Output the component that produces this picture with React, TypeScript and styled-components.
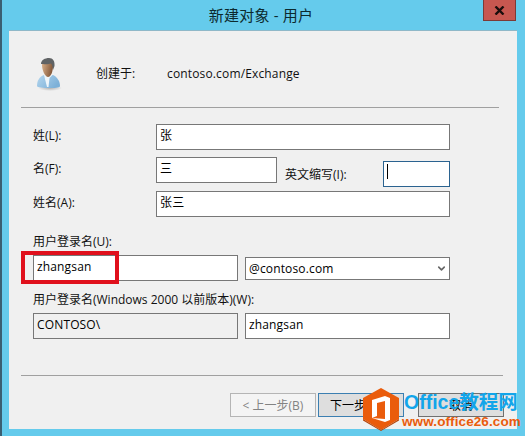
import styled, { createGlobalStyle } from "styled-components";
import { ChevronDown } from "lucide-react";

const GlobalStyle = createGlobalStyle`
  html, body {
    margin: 0;
    padding: 0;
    background: #65cbec;
  }
  * {
    box-sizing: border-box;
  }
`;

const uiFont = `"Open Sans", "Noto Sans CJK SC", sans-serif`;

const Window = styled.div`
  position: relative;
  width: 525px;
  height: 436px;
  overflow: hidden;
  display: flex;
  flex-direction: column;
  background: #65cbec;
  border-left: 2px solid #3a5f72;
  font-family: ${uiFont};
  font-size: 12px;
  color: #111;
`;

const TitleBar = styled.div`
  position: relative;
  height: 30px;
  flex: none;
  display: flex;
  align-items: center;
  justify-content: center;
  padding: 0 5px 2px 0;
  font-size: 15px;
  letter-spacing: 0.2px;
  color: #0c2a2e;
`;

const CloseButton = styled.div`
  position: absolute;
  top: 0;
  left: 481px;
  width: 33px;
  height: 21px;
  display: flex;
  align-items: center;
  justify-content: center;
  background: #c75750;
  border: 1px solid #7d3a36;
  border-top: none;
`;

const Panel = styled.div`
  flex: none;
  width: 508px;
  height: 399px;
  margin-left: 7px;
  padding: 0 12px;
  background: #f0f0f0;
  border-top: 1px solid #8fb8c8;
`;

const Header = styled.div`
  height: 76px;
  display: flex;
  align-items: center;
  padding: 8px 0 0 15px;
`;

const HeaderIcon = styled.span`
  display: flex;
  margin-top: 2px;
`;

const HeaderLabel = styled.span`
  margin-left: 34px;
  width: 71px;
`;

const HeaderValue = styled.span`
  letter-spacing: 0.15px;
`;

const Rule = styled.div<{ $width: number }>`
  height: 1px;
  width: ${({ $width }) => $width}px;
  background: #a0a0a0;
`;

const Form = styled.div`
  height: 267px;
  padding: 16px 0 0 12px;
`;

const Row = styled.div<{ $gap: number }>`
  display: flex;
  align-items: flex-start;
  height: 26px;
  margin-bottom: ${({ $gap }) => $gap}px;
`;

const RowLabel = styled.label`
  width: 123px;
  flex: none;
  line-height: 24px;
`;

const InlineLabel = styled.label`
  width: 98px;
  flex: none;
  margin-left: 8px;
  line-height: 24px;
  margin-top: 6px;
`;

const GroupLabel = styled.label<{ $top?: number }>`
  display: block;
  height: 16px;
  line-height: 16px;
  margin-top: ${({ $top }) => $top ?? 0}px;
  margin-bottom: 5px;
`;

const Field = styled.input<{ $width: number; $disabled?: boolean }>`
  width: ${({ $width }) => $width}px;
  height: 26px;
  flex: none;
  padding: 0 3px 4px;
  border: 1px solid #777;
  border-radius: 0;
  outline: none;
  background: ${({ $disabled }) => ($disabled ? "#f0f0f0" : "#fff")};
  font: inherit;
  letter-spacing: 0.15px;
  color: #000;
`;

const AbbrevBox = styled.div`
  position: relative;
  width: 67px;
  height: 26px;
  flex: none;
  margin-top: 4px;
  background: #fff;
  border: 1px solid #2b6390;
`;

const Caret = styled.span`
  position: absolute;
  left: 3px;
  top: 2px;
  width: 1px;
  height: 15px;
  background: #000;
`;

const FieldPair = styled.div`
  display: flex;
  align-items: center;
  gap: 7px;
  height: 26px;
`;

const SelectBox = styled.div`
  position: relative;
  width: 205px;
  height: 23px;
  flex: none;
  color: #666;
`;

const Select = styled.select`
  width: 100%;
  height: 100%;
  padding: 0 0 0 3px;
  appearance: none;
  border: 1px solid #777;
  border-radius: 0;
  outline: none;
  background: #fff;
  font: inherit;
  letter-spacing: 0.15px;
  color: #000;
`;

const SelectArrow = styled.span`
  position: absolute;
  right: 3px;
  top: 6px;
  display: flex;
`;

const Footer = styled.div`
  display: flex;
  justify-content: flex-end;
  gap: 2px;
  padding: 17px 0 0 0;
  width: 483px;
`;

const WizardButton = styled.button<{ $variant: "disabled" | "primary" | "normal"; $after?: number }>`
  width: 86px;
  height: 24px;
  padding: 0;
  margin-right: ${({ $after }) => $after ?? 0}px;
  font: inherit;
  border: 1px solid
    ${({ $variant }) =>
      $variant === "disabled" ? "#b5b5b5" : $variant === "primary" ? "#3c7fb1" : "#707070"};
  background: ${({ $variant }) => ($variant === "disabled" ? "#f4f4f4" : "#dedede")};
  color: ${({ $variant }) => ($variant === "disabled" ? "#838383" : "#000")};
`;

const Highlight = styled.div`
  position: absolute;
  left: 19px;
  top: 251px;
  width: 98px;
  height: 33px;
  border: 4px solid #e0101c;
`;

const Watermark = styled.div`
  position: absolute;
  left: 360px;
  top: 387px;
  display: flex;
  align-items: flex-start;
  gap: 2px;
`;

const WatermarkText = styled.div`
  display: flex;
  flex-direction: column;
  margin-top: 4px;
  font-family: "Liberation Sans", "Noto Sans CJK SC", sans-serif;
  font-weight: 700;
`;

const WatermarkTitle = styled.span`
  font-size: 19.5px;
  line-height: 23px;
  padding-left: 2px;
  color: #12a5ea;
  white-space: nowrap;
`;

const WatermarkUrl = styled.span`
  font-size: 13.5px;
  line-height: 15px;
  letter-spacing: 0.1px;
  color: #ea5c0c;
  white-space: nowrap;
`;

const UserIcon = () => (
  <svg width="26" height="33" viewBox="0 0 26 33">
    <defs>
      <linearGradient id="face" x1="0" y1="0" x2="1" y2="0.3">
        <stop offset="0" stopColor="#dcb48e" />
        <stop offset="1" stopColor="#85593a" />
      </linearGradient>
      <linearGradient id="shirt" x1="0" y1="0" x2="1" y2="0.5">
        <stop offset="0" stopColor="#b4d6ee" />
        <stop offset="1" stopColor="#7cb0d8" />
      </linearGradient>
      <radialGradient id="shade" cx="0.5" cy="0.5" r="0.5">
        <stop offset="0" stopColor="#888" stopOpacity="0.6" />
        <stop offset="1" stopColor="#888" stopOpacity="0" />
      </radialGradient>
    </defs>
    <ellipse cx="14" cy="30" rx="12" ry="3" fill="url(#shade)" />
    <path d="M1 28c0-5 2-9 7-11h9c4 2 7 6 7 11 0 1.500-3 2-10 2S1 29.500 1 28z" fill="url(#shirt)" />
    <path d="M8 17l3 12 1.500 0 1-9 3-3z" fill="#eef5fa" />
    <path d="M6 7c0-3 3-5 6-5s5 3 5 6c0 5-2 11-5 11-3 0-6-7-6-12z" fill="url(#face)" />
    <path d="M5 6c0-4 4-6 8-6 4 0 6 3 5.500 8L17 12c-.5-3-.5-5-2-6.500-2 .8-6 1-8 .5z" fill="#606365" />
  </svg>
);

const OfficeBadge = () => (
  <svg width="38" height="44" viewBox="0 0 38 44">
    <path d="M19 1l18 10v21L19 43 1 32V11z" fill="#ea5c0c" />
    <path d="M1 32l18 11 18-11v1.500L19 44 1 33.500z" fill="#b8460a" />
    <path d="M10 13l13-4 5 2v22l-5 2-13-4 13 1V14l-8 2v13l-5 2z" fill="#fff" />
  </svg>
);

export default function App() {
  return (
    <>
      <GlobalStyle />
      <Window>
        <TitleBar>
          新建对象 - 用户
          <CloseButton>
            <svg width="11" height="9" viewBox="0 0 11 9">
              <path d="M1.500 0.500l8 8M9.500 0.500l-8 8" stroke="#1a0d0c" strokeWidth="2.400" />
            </svg>
          </CloseButton>
        </TitleBar>
        <Panel>
          <Header>
            <HeaderIcon>
              <UserIcon />
            </HeaderIcon>
            <HeaderLabel>创建于:</HeaderLabel>
            <HeaderValue>contoso.com/Exchange</HeaderValue>
          </Header>
          <Rule $width={478} />
          <Form>
            <Row $gap={7}>
              <RowLabel>姓(L):</RowLabel>
              <Field $width={294} defaultValue="张" />
            </Row>
            <Row $gap={8}>
              <RowLabel>名(F):</RowLabel>
              <Field $width={121} defaultValue="三" />
              <InlineLabel>英文缩写(I):</InlineLabel>
              <AbbrevBox>
                <Caret />
              </AbbrevBox>
            </Row>
            <Row $gap={17}>
              <RowLabel>姓名(A):</RowLabel>
              <Field $width={294} defaultValue="张三" />
            </Row>
            <GroupLabel>用户登录名(U):</GroupLabel>
            <FieldPair>
              <Field $width={205} defaultValue="zhangsan" />
              <SelectBox>
                <Select defaultValue="@contoso.com">
                  <option>@contoso.com</option>
                </Select>
                <SelectArrow>
                  <ChevronDown size={11} strokeWidth={3.500} />
                </SelectArrow>
              </SelectBox>
            </FieldPair>
            <GroupLabel $top={11}>用户登录名(Windows 2000 以前版本)(W):</GroupLabel>
            <FieldPair>
              <Field $width={205} $disabled readOnly defaultValue="CONTOSO\" />
              <Field $width={205} defaultValue="zhangsan" />
            </FieldPair>
          </Form>
          <Rule $width={482} />
          <Footer>
            <WizardButton $variant="disabled" disabled>
              &lt; 上一步(B)
            </WizardButton>
            <WizardButton $variant="primary" $after={12}>
              下一步(N) &gt;
            </WizardButton>
            <WizardButton $variant="normal">取消</WizardButton>
          </Footer>
        </Panel>
        <Highlight />
        <Watermark>
          <OfficeBadge />
          <WatermarkText>
            <WatermarkTitle>Office教程网</WatermarkTitle>
            <WatermarkUrl>www.office26.com</WatermarkUrl>
          </WatermarkText>
        </Watermark>
      </Window>
    </>
  );
}
